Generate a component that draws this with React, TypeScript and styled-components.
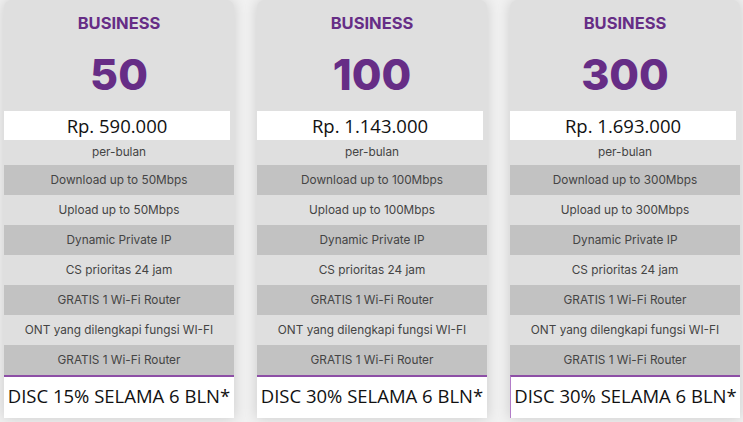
import * as React from "react";
import styled, { createGlobalStyle } from "styled-components";

const GlobalStyle = createGlobalStyle`
  html, body {
    margin: 0;
    padding: 0;
    background: #f1f1f1;
    overflow: hidden;
  }
`;

const Page = styled.div`
  display: flex;
  gap: 23px;
  padding-left: 4px;
  width: 743px;
  height: 422px;
  box-sizing: border-box;
`;

const Card = styled.div`
  width: 230px;
  height: 418px;
  background: #dfdfdf;
  border-radius: 8px 8px 0 0;
  box-shadow: 0 0 14px rgba(0, 0, 0, 0.16);
  display: flex;
  flex-direction: column;
  overflow: hidden;
`;

const Title = styled.h2`
  margin: 12px 0 0;
  height: 22px;
  line-height: 22px;
  text-align: center;
  font-family: "Inter", "DejaVu Sans", sans-serif;
  font-weight: 700;
  font-size: 16.5px;
  color: #662d86;
`;

const Speed = styled.div`
  margin-top: 10px;
  height: 63px;
  line-height: 60px;
  text-align: center;
  font-family: "Inter", "DejaVu Sans", sans-serif;
  font-weight: 800;
  font-size: 43px;
  color: #662d86;
`;

const Price = styled.div`
  margin: 4px 4px 0 0;
  height: 29px;
  line-height: 29px;
  background: #fff;
  text-align: center;
  font-family: "Open Sans", "Noto Sans", sans-serif;
  font-size: 18.5px;
  color: #111;
`;

const Row = styled.div<{ $dark?: boolean; $h?: number }>`
  height: ${(p) => p.$h ?? 30}px;
  line-height: ${(p) => p.$h ?? 30}px;
  background: ${(p) => (p.$dark ? "#c2c2c2" : "transparent")};
  text-align: center;
  font-family: "Inter", "DejaVu Sans", sans-serif;
  font-size: 11.8px;
  color: #444;
  white-space: nowrap;
`;

const Promo = styled.div<{ $side?: boolean }>`
  flex: 1;
  background: #fff;
  border-top: 2px solid #8d4fa6;
  border-left: ${(p) => (p.$side ? "1px solid #b27cc8" : "none")};
  text-align: center;
  font-family: "Open Sans", "Noto Sans", sans-serif;
  font-size: 18.5px;
  line-height: 38px;
  color: #111;
  white-space: nowrap;
`;

type Plan = {
  speed: string;
  price: string;
  disc: string;
  side?: boolean;
};

const plans: Plan[] = [
  { speed: "50", price: "Rp. 590.000", disc: "DISC 15% SELAMA 6 BLN*" },
  { speed: "100", price: "Rp. 1.143.000", disc: "DISC 30% SELAMA 6 BLN*" },
  { speed: "300", price: "Rp. 1.693.000", disc: "DISC 30% SELAMA 6 BLN*", side: true },
];

function PlanCard({ plan }: { plan: Plan }) {
  const features = [
    `Download up to ${plan.speed}Mbps`,
    `Upload up to ${plan.speed}Mbps`,
    "Dynamic Private IP",
    "CS prioritas 24 jam",
    "GRATIS 1 Wi-Fi Router",
    "ONT yang dilengkapi fungsi WI-FI",
    "GRATIS 1 Wi-Fi Router",
  ];

  return (
    <Card>
      <Title>BUSINESS</Title>
      <Speed>{plan.speed}</Speed>
      <Price>{plan.price}</Price>
      <Row $h={25}>per-bulan</Row>
      {features.map((f, i) => (
        <Row key={i} $dark={i % 2 === 0}>
          {f}
        </Row>
      ))}
      <Promo $side={plan.side}>{plan.disc}</Promo>
    </Card>
  );
}

export default function App() {
  return (
    <>
      <GlobalStyle />
      <Page>
        {plans.map((p) => (
          <PlanCard key={p.speed} plan={p} />
        ))}
      </Page>
    </>
  );
}
